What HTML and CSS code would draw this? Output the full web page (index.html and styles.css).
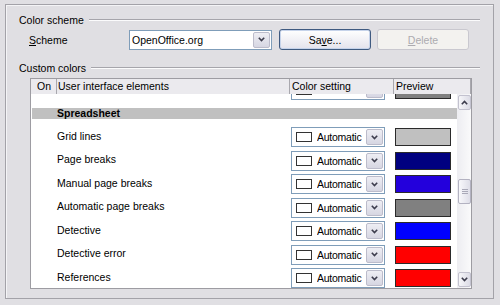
FILE: index.html
```html
<!DOCTYPE html>
<html lang="en">
<head>
    <meta charset="UTF-8">
    <title>Appearance</title>
    <link rel="stylesheet" href="styles.css">
</head>
<body>
    <div class="dialog">
        <div class="group-title"><span>Color scheme</span></div>
        <div class="scheme-row">
            <label class="scheme-label"><u>S</u>cheme</label>
            <div class="combo scheme-combo">
                <span class="combo-text">OpenOffice.org</span>
                <span class="drop"><svg width="7" height="5" viewBox="0 0 7 5"><polyline points="0.8,0.8 3.5,3.6 6.2,0.8" fill="none" stroke="#3d3d4d" stroke-width="1.6"/></svg></span>
            </div>
            <button class="push save">Sa<u>v</u>e...</button>
            <button class="push delete" disabled><u>D</u>elete</button>
        </div>
        <div class="group-title second"><span>Custom colors</span></div>

        <div class="listbox">
            <div class="list-head">
                <div class="hcell on">On</div>
                <div class="hcell ui">User interface elements</div>
                <div class="hcell setting">Color setting</div>
                <div class="hcell preview-col">Preview</div>
            </div>
            <div class="list-body">
                <div class="rows">
                    <div class="rows-inner">
                        <!-- row scrolled half out of view -->
                        <div class="row">
                            <span></span>
                            <span></span>
                            <div class="combo color-combo">
                                <span class="swatch"></span><span class="combo-text">Automatic</span>
                                <span class="drop"><svg width="7" height="5" viewBox="0 0 7 5"><polyline points="0.8,0.8 3.5,3.6 6.2,0.8" fill="none" stroke="#3d3d4d" stroke-width="1.6"/></svg></span>
                            </div>
                            <div class="preview" style="background: #808080;"></div>
                        </div>
                        <div class="section-slot">
                            <div class="section-band">Spreadsheet</div>
                        </div>
                        <div class="row">
                            <span></span>
                            <span class="item-name">Grid lines</span>
                            <div class="combo color-combo">
                                <span class="swatch"></span><span class="combo-text">Automatic</span>
                                <span class="drop"><svg width="7" height="5" viewBox="0 0 7 5"><polyline points="0.8,0.8 3.5,3.6 6.2,0.8" fill="none" stroke="#3d3d4d" stroke-width="1.6"/></svg></span>
                            </div>
                            <div class="preview" style="background: #c0c0c0;"></div>
                        </div>
                        <div class="row">
                            <span></span>
                            <span class="item-name">Page breaks</span>
                            <div class="combo color-combo">
                                <span class="swatch"></span><span class="combo-text">Automatic</span>
                                <span class="drop"><svg width="7" height="5" viewBox="0 0 7 5"><polyline points="0.8,0.8 3.5,3.6 6.2,0.8" fill="none" stroke="#3d3d4d" stroke-width="1.6"/></svg></span>
                            </div>
                            <div class="preview" style="background: #000080;"></div>
                        </div>
                        <div class="row">
                            <span></span>
                            <span class="item-name">Manual page breaks</span>
                            <div class="combo color-combo">
                                <span class="swatch"></span><span class="combo-text">Automatic</span>
                                <span class="drop"><svg width="7" height="5" viewBox="0 0 7 5"><polyline points="0.8,0.8 3.5,3.6 6.2,0.8" fill="none" stroke="#3d3d4d" stroke-width="1.6"/></svg></span>
                            </div>
                            <div class="preview" style="background: #2300dc;"></div>
                        </div>
                        <div class="row">
                            <span></span>
                            <span class="item-name">Automatic page breaks</span>
                            <div class="combo color-combo">
                                <span class="swatch"></span><span class="combo-text">Automatic</span>
                                <span class="drop"><svg width="7" height="5" viewBox="0 0 7 5"><polyline points="0.8,0.8 3.5,3.6 6.2,0.8" fill="none" stroke="#3d3d4d" stroke-width="1.6"/></svg></span>
                            </div>
                            <div class="preview" style="background: #808080;"></div>
                        </div>
                        <div class="row">
                            <span></span>
                            <span class="item-name">Detective</span>
                            <div class="combo color-combo">
                                <span class="swatch"></span><span class="combo-text">Automatic</span>
                                <span class="drop"><svg width="7" height="5" viewBox="0 0 7 5"><polyline points="0.8,0.8 3.5,3.6 6.2,0.8" fill="none" stroke="#3d3d4d" stroke-width="1.6"/></svg></span>
                            </div>
                            <div class="preview" style="background: #0000ff;"></div>
                        </div>
                        <div class="row">
                            <span></span>
                            <span class="item-name">Detective error</span>
                            <div class="combo color-combo">
                                <span class="swatch"></span><span class="combo-text">Automatic</span>
                                <span class="drop"><svg width="7" height="5" viewBox="0 0 7 5"><polyline points="0.8,0.8 3.5,3.6 6.2,0.8" fill="none" stroke="#3d3d4d" stroke-width="1.6"/></svg></span>
                            </div>
                            <div class="preview" style="background: #ff0000;"></div>
                        </div>
                        <div class="row">
                            <span></span>
                            <span class="item-name">References</span>
                            <div class="combo color-combo">
                                <span class="swatch"></span><span class="combo-text">Automatic</span>
                                <span class="drop"><svg width="7" height="5" viewBox="0 0 7 5"><polyline points="0.8,0.8 3.5,3.6 6.2,0.8" fill="none" stroke="#3d3d4d" stroke-width="1.6"/></svg></span>
                            </div>
                            <div class="preview" style="background: #ff0000;"></div>
                        </div>
                    </div>
                </div>
                <div class="scrollbar">
                    <div class="sb-btn"><svg width="7" height="5" viewBox="0 0 7 5"><polyline points="0.8,4.2 3.5,1.4 6.2,4.2" fill="none" stroke="#3d3d4d" stroke-width="1.6"/></svg></div>
                    <div class="sb-track">
                        <div class="sb-thumb"><svg width="6" height="6" viewBox="0 0 6 6"><path d="M0 0.5h6M0 2.5h6M0 4.5h6" stroke="#a9a9b8" stroke-width="1"/></svg></div>
                    </div>
                    <div class="sb-btn"><svg width="7" height="5" viewBox="0 0 7 5"><polyline points="0.8,0.8 3.5,3.6 6.2,0.8" fill="none" stroke="#3d3d4d" stroke-width="1.6"/></svg></div>
                </div>
            </div>
        </div>
    </div>
</body>
</html>
```

FILE: styles.css
```css
body {
    margin: 0;
    background: #e0dfe3;
    font-family: "Liberation Sans", Arial, sans-serif;
    font-size: 10.5px;
    color: #000;
}

.dialog {   /* outer tab page frame */
    box-sizing: border-box;
    width: 489px;
    height: 295px;
    margin: 4px 0 0 5px;
    padding: 8px 13px 0 13px;
    border: 1px solid #a3a2a8;
    box-shadow: inset 1px 1px 0 #f4f4f6;
}

.group-title {
    display: flex;
    align-items: center;
    height: 14px;
}

.group-title::after {
    content: "";
    flex: 1;
    margin-left: 5px;
    border-top: 1px solid #a6a5ab;
    border-bottom: 1px solid #fbfbfc;
}

.group-title.second {
    margin-top: 11px;
}

.scheme-row {
    display: flex;
    align-items: center;
    height: 21px;
    margin-top: 2px;
}

.scheme-label {
    width: 110px;
    padding-left: 10px;
    box-sizing: border-box;
}

.combo {
    box-sizing: border-box;
    height: 20px;
    border: 1px solid #7f9db9;
    background: #fff;
    display: flex;
    align-items: center;
}

.scheme-combo {
    width: 143px;
}

.scheme-combo .combo-text {
    padding-left: 2px;
}

.combo-text {
    flex: 1;
    min-width: 0;
    overflow: hidden;
    white-space: nowrap;
}

.drop {
    box-sizing: border-box;
    flex: none;
    width: 17px;
    height: 16px;
    margin-right: 1px;
    border: 1px solid #bcbccb;
    border-radius: 2px;
    background: linear-gradient(#eeeef4, #d6d6e2);
    display: flex;
    align-items: center;
    justify-content: center;
}

.push {
    box-sizing: border-box;
    width: 92px;
    height: 21px;
    padding: 0;
    font-family: inherit;
    font-size: 10.5px;
    color: #000;
    border-radius: 3px;
}

.save {
    margin-left: 7px;
    border: 1px solid #3f5a80;
    background: linear-gradient(#ffffff, #e4e3ec);
    box-shadow: inset 0 0 0 1px #c6d3ea;
}

.delete {
    margin-left: 6px;
    border: 1px solid #c9c8cf;
    background: #f3f2ef;
    color: #acabb0;
}

/* list of ui elements */
.listbox {
    box-sizing: border-box;
    width: 442px;
    height: 211px;
    margin: 3px 0 0 11px;
    border: 1px solid #9d9ca2;
    background: #fff;
}

.list-head {
    position: relative;
    z-index: 1;
    display: flex;
    height: 15px;
    background: #ebeaee;
}

.hcell {
    box-sizing: border-box;
    border-right: 1px solid #a9a8ae;
    line-height: 15px;
    white-space: nowrap;
}

.hcell.on {
    width: 26px;
    padding-left: 6px;
}

.hcell.ui {
    width: 233px;
    padding-left: 1px;
}

.hcell.setting {
    width: 104px;
    padding-left: 2px;
}

.hcell.preview-col {
    flex: 1;
    padding-left: 2px;
}

.list-body {
    display: flex;
    height: 194px;
}

.rows {
    flex: 1;
    overflow: hidden;
}

.rows-inner {
    margin-top: -15.75px;
}

.row {
    display: grid;
    grid-template-columns: 26px 233px 104px 1fr;
    align-items: center;
    height: 23.5px;
}

.item-name {
    padding-bottom: 3px;
}

.color-combo {
    width: 94px;
    margin-left: 1px;
}

.swatch {
    box-sizing: border-box;
    flex: none;
    width: 16px;
    height: 10px;
    margin-left: 4px;
    border: 1px solid #333;
    background: #fff;
}

.color-combo .combo-text {
    margin-left: 5px;
    letter-spacing: -0.25px;
}

.preview {
    box-sizing: border-box;
    width: 56px;
    height: 18px;
    margin-left: 1px;
    border: 1px solid #2a2a2a;
}

.section-slot {
    height: 23.5px;
    display: flex;
    align-items: center;
}

.section-band {
    flex: 1;
    height: 11px;
    line-height: 11px;
    margin-left: 1px;
    padding-left: 25px;
    background: #c0c0c0;
    font-weight: bold;
}

.scrollbar {
    width: 14px;
    display: flex;
    flex-direction: column;
    background: linear-gradient(to right, #ededf1, #fafafb);
}

.sb-btn {
    box-sizing: border-box;
    height: 15px;
    margin: 1px 0 1px 1px;
    border: 1px solid #c3c2cf;
    border-radius: 2px;
    background: linear-gradient(to right, #f6f6f9, #dcdce6);
    display: flex;
    align-items: center;
    justify-content: center;
}

.sb-track {
    flex: 1;
}

.sb-thumb {
    box-sizing: border-box;
    height: 25px;
    margin: 68px 0 0 1px;
    border: 1px solid #b3b2c1;
    border-radius: 2px;
    background: linear-gradient(to right, #f8f8fb, #dedee8);
    display: flex;
    align-items: center;
    justify-content: center;
}
```
